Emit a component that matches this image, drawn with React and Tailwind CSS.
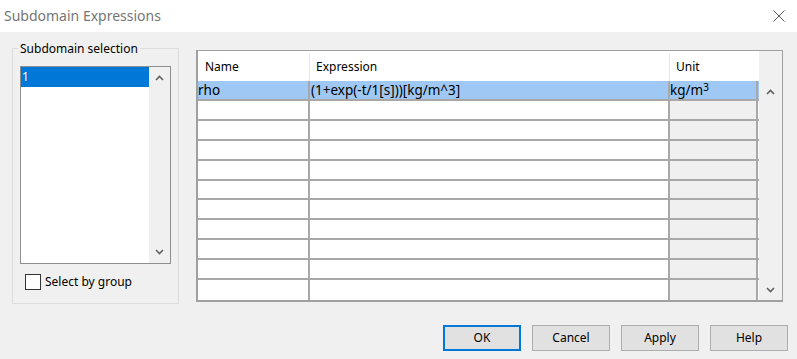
const rows = Array.from({ length: 10 });

function Chevron({ up }) {
  return (
    <svg width="9" height="6" viewBox="0 0 9 6">
      <path d={up ? 'M1 5 L4.5 1.5 L8 5' : 'M1 1 L4.5 4.5 L8 1'} fill="none" stroke="#606060" strokeWidth="1.6" />
    </svg>
  );
}

function Button({ label, primary }) {
  return (
    <button
      className={`w-[78px] h-[26px] bg-[#e1e1e1] text-[12px] text-[#000] ${
        primary ? 'border-2 border-[#0078d7]' : 'border border-[#adadad]'
      }`}
    >
      {label}
    </button>
  );
}

export default function App() {
  return (
    <div className="w-[797px] h-[359px] bg-[#f0f0f0] flex flex-col font-['Noto_Sans',sans-serif] text-[12px] text-black overflow-hidden">
      {/* title bar */}
      <div className="h-[32px] bg-white flex items-center justify-between pl-[4px] pr-[12px] shrink-0">
        <span className="text-[14px] text-[#767676] leading-none">Subdomain Expressions</span>
        <svg width="12" height="12" viewBox="0 0 12 12">
          <path d="M0.5 0.5 L11.5 11.5 M11.5 0.5 L0.5 11.5" stroke="#555" strokeWidth="1" />
        </svg>
      </div>

      <div className="flex pl-[12px]">
        {/* group box */}
        <div className="relative mt-[16px] w-[167px] h-[256px] border border-[#dcdcdc] pt-[17px] pl-[7px]">
          <span className="absolute -top-[8px] left-[5px] bg-[#f0f0f0] px-[2px] leading-[16px]">Subdomain selection</span>
          <div className="w-[151px] h-[198px] border border-[#8e8e8e] bg-white flex">
            <div className="flex-1">
              <div className="h-[20px] bg-[#0078d7] text-white pl-[1px] leading-[20px]">1</div>
            </div>
            <div className="w-[21px] bg-[#f0f0f0] flex flex-col items-center justify-between py-[8px]">
              <Chevron up />
              <Chevron />
            </div>
          </div>
          <label className="flex items-center gap-[4px] mt-[9px] ml-[5px]">
            <span className="w-[16px] h-[16px] border border-[#333] bg-white" />
            <span>Select by group</span>
          </label>
        </div>

        {/* table */}
        <div className="ml-[17px] mt-[18px] w-[587px] h-[252px] border border-[#a0a0a0] border-l-2 border-b-2 flex bg-white">
          <div className="flex flex-col w-[561px]">
            <div className="h-[30px] flex bg-white pt-[3px]">
              <div className="w-[112px] pl-[7px] flex items-center border-r border-[#e6e6e6]">Name</div>
              <div className="w-[360px] pl-[6px] flex items-center border-r border-[#e6e6e6]">Expression</div>
              <div className="w-[88px] pl-[6px] flex items-center">Unit</div>
            </div>
            <div className="h-[20px] flex bg-[#9fc8f5] border-b-2 border-[#a8a8a8] text-[13.5px]">
              <div className="w-[112px] flex items-center border-r-2 border-[#a8a8a8]">rho</div>
              <div className="w-[360px] pl-[1px] flex items-center border-r-2 border-[#a8a8a8]">(1+exp(-t/1[s]))[kg/m^3]</div>
              <div className="w-[88px] flex items-center border-r-2 border-[#a8a8a8]">
                kg/m<span className="text-[10px] self-start leading-[10px] mt-[1px]">3</span>
              </div>
            </div>
            {rows.map((_, i) => (
              <div key={i} className={`h-[20px] flex ${i < rows.length - 1 ? 'border-b-2 border-[#a8a8a8]' : ''}`}>
                <div className="w-[112px] border-r-2 border-[#a8a8a8]" />
                <div className="w-[360px] border-r-2 border-[#a8a8a8]" />
                <div className="w-[88px] bg-[#f0f0f0] border-r-2 border-[#a8a8a8]" />
              </div>
            ))}
          </div>
          <div className="flex-1 bg-[#f0f0f0] flex flex-col items-center justify-between pt-[38px] pb-[7px]">
            <Chevron up />
            <Chevron />
          </div>
        </div>
      </div>

      {/* buttons */}
      <div className="flex justify-end gap-[11px] pr-[9px] mt-[21px]">
        <Button label="OK" primary />
        <Button label="Cancel" />
        <Button label="Apply" />
        <Button label="Help" />
      </div>
    </div>
  );
}
